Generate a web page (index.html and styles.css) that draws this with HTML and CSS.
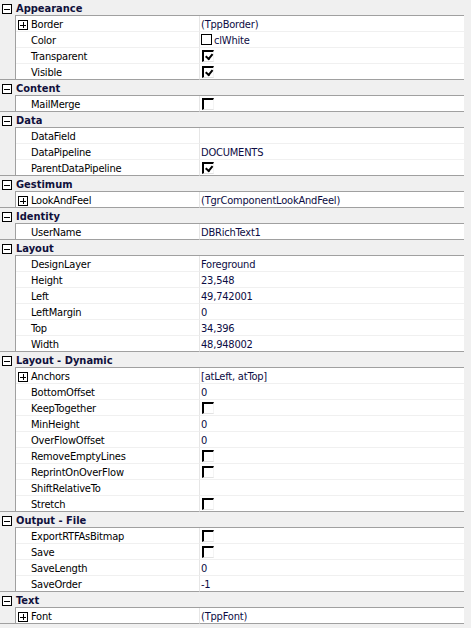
FILE: index.html
```html
<!DOCTYPE html>
<html>
<head>
<meta charset="utf-8">
<link rel="stylesheet" href="styles.css">
</head>
<body>
<div class="grid">

  <div class="hdr"><div class="tog"><span class="box minus"></span></div><div class="title">Appearance</div></div>
  <div class="row"><div class="gut"></div><div class="name"><span class="ic"><span class="box plus"></span></span>Border</div><div class="val">(TppBorder)</div></div>
  <div class="row"><div class="gut"></div><div class="name"><span class="ic"></span>Color</div><div class="val"><span class="swatch"></span>clWhite</div></div>
  <div class="row"><div class="gut"></div><div class="name"><span class="ic"></span>Transparent</div><div class="val"><span class="cb on"></span></div></div>
  <div class="row last"><div class="gut"></div><div class="name"><span class="ic"></span>Visible</div><div class="val"><span class="cb on"></span></div></div>

  <div class="hdr"><div class="tog"><span class="box minus"></span></div><div class="title">Content</div></div>
  <div class="row last"><div class="gut"></div><div class="name"><span class="ic"></span>MailMerge</div><div class="val"><span class="cb"></span></div></div>

  <div class="hdr"><div class="tog"><span class="box minus"></span></div><div class="title">Data</div></div>
  <div class="row"><div class="gut"></div><div class="name"><span class="ic"></span>DataField</div><div class="val"></div></div>
  <div class="row"><div class="gut"></div><div class="name"><span class="ic"></span>DataPipeline</div><div class="val">DOCUMENTS</div></div>
  <div class="row last"><div class="gut"></div><div class="name"><span class="ic"></span>ParentDataPipeline</div><div class="val"><span class="cb on"></span></div></div>

  <div class="hdr"><div class="tog"><span class="box minus"></span></div><div class="title">Gestimum</div></div>
  <div class="row last"><div class="gut"></div><div class="name"><span class="ic"><span class="box plus"></span></span>LookAndFeel</div><div class="val">(TgrComponentLookAndFeel)</div></div>

  <div class="hdr"><div class="tog"><span class="box minus"></span></div><div class="title">Identity</div></div>
  <div class="row last"><div class="gut"></div><div class="name"><span class="ic"></span>UserName</div><div class="val">DBRichText1</div></div>

  <div class="hdr"><div class="tog"><span class="box minus"></span></div><div class="title">Layout</div></div>
  <div class="row"><div class="gut"></div><div class="name"><span class="ic"></span>DesignLayer</div><div class="val">Foreground</div></div>
  <div class="row"><div class="gut"></div><div class="name"><span class="ic"></span>Height</div><div class="val">23,548</div></div>
  <div class="row"><div class="gut"></div><div class="name"><span class="ic"></span>Left</div><div class="val">49,742001</div></div>
  <div class="row"><div class="gut"></div><div class="name"><span class="ic"></span>LeftMargin</div><div class="val">0</div></div>
  <div class="row"><div class="gut"></div><div class="name"><span class="ic"></span>Top</div><div class="val">34,396</div></div>
  <div class="row last"><div class="gut"></div><div class="name"><span class="ic"></span>Width</div><div class="val">48,948002</div></div>

  <div class="hdr"><div class="tog"><span class="box minus"></span></div><div class="title">Layout - Dynamic</div></div>
  <div class="row"><div class="gut"></div><div class="name"><span class="ic"><span class="box plus"></span></span>Anchors</div><div class="val">[atLeft, atTop]</div></div>
  <div class="row"><div class="gut"></div><div class="name"><span class="ic"></span>BottomOffset</div><div class="val">0</div></div>
  <div class="row"><div class="gut"></div><div class="name"><span class="ic"></span>KeepTogether</div><div class="val"><span class="cb"></span></div></div>
  <div class="row"><div class="gut"></div><div class="name"><span class="ic"></span>MinHeight</div><div class="val">0</div></div>
  <div class="row"><div class="gut"></div><div class="name"><span class="ic"></span>OverFlowOffset</div><div class="val">0</div></div>
  <div class="row"><div class="gut"></div><div class="name"><span class="ic"></span>RemoveEmptyLines</div><div class="val"><span class="cb"></span></div></div>
  <div class="row"><div class="gut"></div><div class="name"><span class="ic"></span>ReprintOnOverFlow</div><div class="val"><span class="cb"></span></div></div>
  <div class="row"><div class="gut"></div><div class="name"><span class="ic"></span>ShiftRelativeTo</div><div class="val"></div></div>
  <div class="row last"><div class="gut"></div><div class="name"><span class="ic"></span>Stretch</div><div class="val"><span class="cb"></span></div></div>

  <div class="hdr"><div class="tog"><span class="box minus"></span></div><div class="title">Output - File</div></div>
  <div class="row"><div class="gut"></div><div class="name"><span class="ic"></span>ExportRTFAsBitmap</div><div class="val"><span class="cb"></span></div></div>
  <div class="row"><div class="gut"></div><div class="name"><span class="ic"></span>Save</div><div class="val"><span class="cb"></span></div></div>
  <div class="row"><div class="gut"></div><div class="name"><span class="ic"></span>SaveLength</div><div class="val">0</div></div>
  <div class="row last"><div class="gut"></div><div class="name"><span class="ic"></span>SaveOrder</div><div class="val">-1</div></div>

  <div class="hdr"><div class="tog"><span class="box minus"></span></div><div class="title">Text</div></div>
  <div class="row last"><div class="gut"></div><div class="name"><span class="ic"><span class="box plus"></span></span>Font</div><div class="val">(TppFont)</div></div>

</div>
</body>
</html>
```

FILE: styles.css
```css
html, body {
  margin: 0;
  padding: 0;
}
body {
  background: #f0f0f0;
  font-family: "DejaVu Sans Condensed", "Liberation Sans", sans-serif;
  font-size: 11px;
  color: #000;
}
.grid {
  width: 464px;
  display: flex;
  flex-direction: column;
}
.hdr {
  display: flex;
  height: 16px;
  background: #f0f0f0;
}
.tog {
  width: 15px;
  padding-left: 2px;
  padding-top: 4px;
  box-sizing: border-box;
}
.title {
  flex: 1;
  height: 16px;
  box-sizing: border-box;
  border-bottom: 1px solid #a0a0a0;
  padding-left: 1px;
  padding-top: 2px;
  font-weight: bold;
  color: #10103c;
  line-height: 13px;
  white-space: nowrap;
}
.box {
  position: relative;
  display: block;
  width: 10px;
  height: 10px;
  box-sizing: border-box;
  border: 1px solid #000;
  background: #fff;
}
.box::before {
  content: "";
  position: absolute;
  left: 1px;
  top: 3px;
  width: 6px;
  height: 1px;
  margin-top: 1px;
  background: #000;
}
.box.plus::after {
  content: "";
  position: absolute;
  left: 3px;
  top: 1px;
  width: 1px;
  height: 6px;
  margin-left: 1px;
  background: #000;
}
.row {
  display: flex;
  height: 16px;
}
.gut {
  width: 16px;
  box-sizing: border-box;
  border-right: 1px solid #a0a0a0;
  background: #f0f0f0;
}
.name {
  width: 184px;
  box-sizing: border-box;
  background: #fff;
  border-bottom: 1px solid #f0f0f0;
  border-right: 1px solid #e6e6e6;
  display: flex;
  align-items: flex-start;
  padding-left: 2px;
  padding-top: 2px;
  line-height: 13px;
  letter-spacing: -0.2px;
  white-space: nowrap;
}
.ic {
  width: 10px;
  height: 10px;
  margin-top: 2px;
  margin-right: 3px;
  flex: none;
}
.val {
  flex: 1;
  box-sizing: border-box;
  background: #fff;
  border-bottom: 1px solid #f0f0f0;
  padding-left: 1px;
  padding-top: 2px;
  display: flex;
  align-items: flex-start;
  line-height: 13px;
  letter-spacing: -0.2px;
  color: #0c0c44;
  white-space: nowrap;
}
.row.last .gut,
.row.last .name,
.row.last .val {
  border-bottom: 1px solid #a0a0a0;
}
.swatch {
  width: 11px;
  height: 11px;
  flex: none;
  box-sizing: border-box;
  border: 1px solid #000;
  background: #fff;
  margin-right: 2px;
}
.cb {
  position: relative;
  width: 12px;
  height: 12px;
  flex: none;
  margin-left: 1px;
  box-sizing: border-box;
  border-top: 2px solid #000;
  border-left: 2px solid #000;
  border-bottom: 1px solid #e3e3e3;
  border-right: 1px solid #f4f4f4;
  background: #fff;
}
.cb.on::after {
  content: "";
  position: absolute;
  left: 1px;
  top: 5px;
  width: 5px;
  height: 3px;
  border-left: 2px solid #000;
  border-bottom: 2px solid #000;
  transform: rotate(-50deg);
  transform-origin: 0 0;
}
```
